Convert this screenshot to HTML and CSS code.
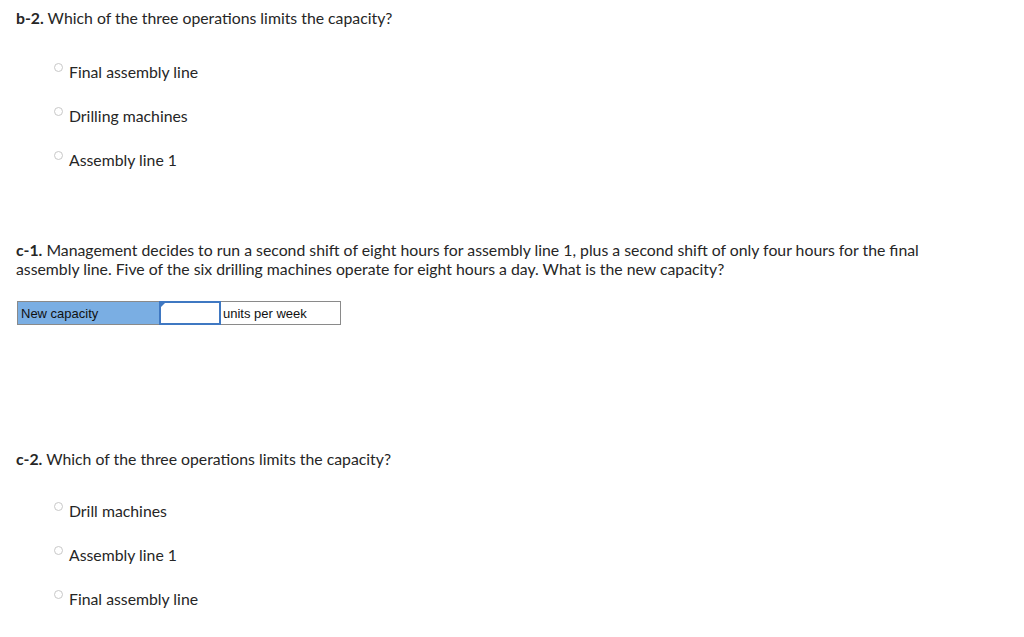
FILE: index.html
```html
<!DOCTYPE html>
<html>
<head>
<meta charset="utf-8">
<link rel="stylesheet" href="styles.css">
</head>
<body>
<div class="page">
  <section class="q q-b2">
    <p class="prompt"><b>b-2.</b> Which of the three operations limits the capacity?</p>
    <ul class="options">
      <li><span class="radio"></span><span>Final assembly line</span></li>
      <li><span class="radio"></span><span>Drilling machines</span></li>
      <li><span class="radio"></span><span>Assembly line 1</span></li>
    </ul>
  </section>
  <section class="q q-c1">
    <p class="prompt"><b>c-1.</b>&nbsp;Management decides to run a second shift of eight hours for assembly line 1, plus a second shift of only four hours for the final assembly line. Five of the six drilling machines operate for eight hours a day. What is the new capacity?</p>
    <div class="answer">
      <div class="cell label">New capacity</div>
      <div class="cell input"><span class="flag"></span></div>
      <div class="cell unit">units per week</div>
    </div>
  </section>
  <section class="q q-c2">
    <p class="prompt"><b>c-2.</b> Which of the three operations limits the capacity?</p>
    <ul class="options">
      <li><span class="radio"></span><span>Drill machines</span></li>
      <li><span class="radio"></span><span>Assembly line 1</span></li>
      <li><span class="radio"></span><span>Final assembly line</span></li>
    </ul>
  </section>
</div>
</body>
</html>
```
FILE: styles.css
```css
html, body {
  margin: 0;
  padding: 0;
  background: #fff;
}
body {
  font-family: "Lato", "Open Sans", sans-serif;
  font-size: 15.8px;
  color: #262626;
}
.page {
  padding: 8px 16px 0 16px;
  width: 915px;
}
.prompt {
  margin: 0;
  line-height: 19px;
}
.prompt b {
  font-weight: 700;
}
.options {
  list-style: none;
  margin: 0;
  padding: 35px 0 0 38px;
  display: flex;
  flex-direction: column;
  gap: 25px;
}
.q-c2 .options {
  padding-top: 33px;
}
.options li {
  display: flex;
  align-items: flex-start;
  line-height: 19px;
}
.radio {
  width: 7px;
  height: 7px;
  border: 1px solid #c8c8c8;
  border-radius: 50%;
  margin: 1px 6px 0 0;
  flex: none;
}
.q-c1 {
  margin-top: 71px;
}
.answer {
  display: flex;
  margin-top: 23px;
  margin-left: 1px;
  height: 24px;
  font-family: "Liberation Sans", Arial, sans-serif;
  font-size: 13px;
  color: #111;
}
.cell {
  box-sizing: border-box;
  height: 24px;
  display: flex;
  align-items: center;
  padding: 0 3px;
  border: 1px solid #8a8a8a;
}
.label {
  width: 142px;
  background: #7aaee3;
  border-right: none;
}
.input {
  width: 62px;
  border: 2px solid #3f78c2;
  position: relative;
  background: #fff;
}
.unit {
  width: 120px;
  border-left: none;
  padding-left: 2px;
}
.flag {
  position: absolute;
  left: 0;
  top: 0;
  width: 0;
  height: 0;
  border-top: 4px solid #3f78c2;
  border-right: 4px solid transparent;
}
.q-c2 {
  margin-top: 124px;
}
```
